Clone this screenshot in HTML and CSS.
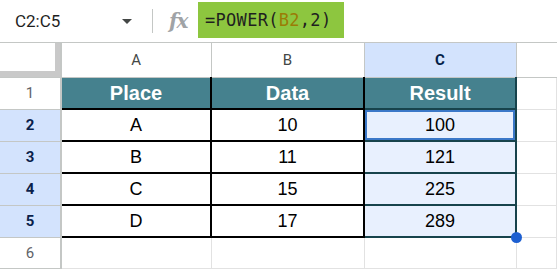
FILE: index.html
```html
<!DOCTYPE html>
<html>
  <head>
    <link rel="stylesheet" href="styles.css">
    <title>POWER</title>
    <meta charset="UTF-8">
  </head>
  <body>
    <div class="toolbar">
      <div class="namebox">C2:C5</div>
      <span class="caret"></span>
      <span class="sep"></span>
      <span class="fx">fx</span>
      <div class="formula">=POWER(<span class="ref">B2</span>,2)</div>
    </div>
    <table class="grid">
      <colgroup>
        <col class="c-rh">
        <col class="c-a">
        <col class="c-b">
        <col class="c-c">
        <col>
      </colgroup>
      <tr class="colhead">
        <th class="corner"></th>
        <th>A</th>
        <th>B</th>
        <th class="sel">C</th>
        <th></th>
      </tr>
      <tr>
        <th class="rh">1</th>
        <td class="hd">Place</td>
        <td class="hd">Data</td>
        <td class="hd res">Result</td>
        <td class="empty"></td>
      </tr>
      <tr>
        <th class="rh sel">2</th>
        <td class="d">A</td>
        <td class="d">10</td>
        <td class="d res val"><div class="active">100</div></td>
        <td class="empty"></td>
      </tr>
      <tr>
        <th class="rh sel">3</th>
        <td class="d">B</td>
        <td class="d">11</td>
        <td class="d res val">121</td>
        <td class="empty"></td>
      </tr>
      <tr>
        <th class="rh sel">4</th>
        <td class="d">C</td>
        <td class="d">15</td>
        <td class="d res val">225</td>
        <td class="empty"></td>
      </tr>
      <tr>
        <th class="rh sel">5</th>
        <td class="d">D</td>
        <td class="d">17</td>
        <td class="d res val last">289<span class="handle"></span></td>
        <td class="empty"></td>
      </tr>
      <tr>
        <th class="rh">6</th>
        <td class="empty"></td>
        <td class="empty"></td>
        <td class="empty"></td>
        <td class="empty"></td>
      </tr>
    </table>
  </body>
</html>
```

FILE: styles.css
```css
body {
  margin: 0;
  background: #fff;
  font-family: "Liberation Sans", Arial, sans-serif;
  overflow: hidden;
}

.toolbar {
  height: 42px;
  border-bottom: 1px solid #c4c7c5;
  display: flex;
  align-items: center;
}
.namebox {
  font-family: Roboto, sans-serif;
  font-size: 17px;
  color: #1f1f1f;
  margin-left: 15px;
  width: 107px;
}
.caret {
  width: 0;
  height: 0;
  border-left: 5px solid transparent;
  border-right: 5px solid transparent;
  border-top: 5px solid #444746;
}
.sep {
  width: 1px;
  height: 24px;
  background: #c4c7c5;
  margin-left: 20px;
}
.fx {
  font-family: "DejaVu Serif", serif;
  font-style: italic;
  font-weight: bold;
  font-size: 20px;
  color: #a0a3a6;
  margin-left: 16px;
  width: 29px;
  letter-spacing: -1px;
}
.formula {
  align-self: flex-start;
  margin-top: 2px;
  height: 36px;
  width: 139px;
  padding-left: 7px;
  background: #8dc63f;
  font-family: "DejaVu Sans Mono", monospace;
  font-size: 17px;
  line-height: 36px;
  color: #1f1f1f;
  letter-spacing: 0.3px;
}
.ref {
  color: #9a7c06;
}

.grid {
  border-collapse: collapse;
  table-layout: fixed;
  width: 557px;
}
.c-rh { width: 61px; }
.c-a { width: 150px; }
.c-b { width: 153px; }
.c-c { width: 152px; }

.grid th,
.grid td {
  padding: 0;
  height: 30px;
  text-align: center;
  font-size: 18px;
}

.colhead th {
  height: 34px;
  font-family: Roboto, sans-serif;
  font-weight: normal;
  font-size: 15px;
  color: #444746;
  border-right: 1px solid #c4c7c5;
  border-bottom: 1px solid #c4c7c5;
}
.colhead th.sel {
  background: #d3e3fd;
  color: #041e49;
  font-weight: bold;
}
.colhead th.corner {
  border-right: 2px solid #c4c7c5;
  box-shadow: inset -5px -6px 0 #c9c9c9;
}
.colhead th:last-child {
  border-right: none;
}

.rh {
  font-family: Roboto, sans-serif;
  font-weight: normal;
  font-size: 15px !important;
  color: #5f6368;
  border-right: 2px solid #c4c7c5;
  border-bottom: 1px solid #c4c7c5;
}
.rh.sel {
  background: #d3e3fd;
  color: #0b1f4b;
  font-weight: bold;
}

.hd {
  background: #45818e;
  color: #fff;
  font-weight: bold;
  font-size: 20px !important;
  border-right: 2px solid #000;
  border-bottom: 2px solid #000;
}
.d {
  color: #000;
  border-right: 2px solid #000;
  border-bottom: 2px solid #000;
}
.res {
  border-left: 2px solid #17434c;
  border-right: 2px solid #17434c;
  border-bottom: 2px solid #17434c;
}
.val {
  background: #e8f0fe;
  position: relative;
}
.active {
  height: 26px;
  line-height: 26px;
  border: 2px solid #3b78c8;
}
.empty {
  border-right: 1px solid #e2e2e2;
  border-bottom: 1px solid #e2e2e2;
}
.handle {
  position: absolute;
  right: -7px;
  bottom: -7px;
  width: 11px;
  height: 11px;
  border-radius: 50%;
  background: #1d5fd1;
  z-index: 2;
}
```
